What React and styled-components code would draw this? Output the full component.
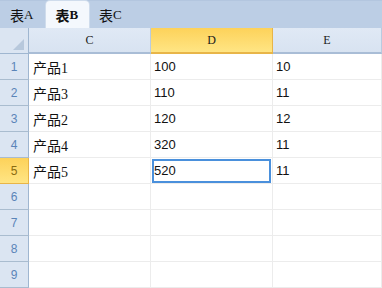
import React from 'react';
import styled, { createGlobalStyle } from 'styled-components';

const GlobalStyle = createGlobalStyle`
  html, body {
    margin: 0;
    padding: 0;
    width: 382px;
    height: 288px;
    overflow: hidden;
    background: #ffffff;
  }
`;

const Window = styled.div`
  width: 382px;
  height: 288px;
  display: flex;
  flex-direction: column;
  overflow: hidden;
  font-family: "Liberation Serif", "Noto Sans CJK SC", serif;
`;

const TitleStrip = styled.div`
  height: 7px;
  background: #dde8f5;
  border-bottom: 1px solid #b3c6df;
  overflow: hidden;
  display: flex;
  justify-content: flex-end;
  align-items: flex-end;
  padding-right: 118px;
`;

const TitleText = styled.span`
  font-family: "Liberation Sans", "Noto Sans CJK SC", sans-serif;
  font-size: 12px;
  line-height: 12px;
  margin-bottom: 3px;
  color: #8a95a6;
  letter-spacing: 2px;
  white-space: nowrap;
`;

const TabBar = styled.div`
  height: 31px;
  background: #bccee5;
  display: flex;
  align-items: flex-end;
`;

const Tab = styled.div`
  height: 27px;
  padding: ${(p) => (p.$active ? '0 11px 0 9px' : '0 10px')};
  margin-left: ${(p) => (p.$active ? '3px' : '0')};
  display: flex;
  align-items: center;
  font-size: 14px;
  font-weight: ${(p) => (p.$active ? 'bold' : 'normal')};
  color: #111;
  background: ${(p) => (p.$active ? '#f4f8fd' : 'transparent')};
  border-radius: 4px 4px 0 0;
  box-shadow: ${(p) => (p.$active ? '0 0 0 1px #cfdcec' : 'none')};
`;

const TabLetter = styled.span`
  font-size: 13px;
`;

const Sheet = styled.div`
  flex: 1;
  display: grid;
  grid-template-columns: 29px 122px 122px 1fr;
  grid-auto-rows: 26px;
`;

const Corner = styled.div`
  background: #dbe5f2;
  border-right: 1px solid #9fb6d0;
  border-bottom: 1px solid #9fb6d0;
  box-sizing: border-box;
  position: relative;
`;

const CornerTriangle = styled.div`
  position: absolute;
  right: 4px;
  bottom: 3px;
  width: 0;
  height: 0;
  border-left: 11px solid transparent;
  border-bottom: 11px solid #b7c8dc;
`;

const ColHead = styled.div`
  box-sizing: border-box;
  display: flex;
  align-items: center;
  justify-content: center;
  font-size: 12px;
  color: #1a1a1a;
  background: ${(p) =>
    p.$active
      ? 'linear-gradient(#fdd25a, #ffe584)'
      : 'linear-gradient(#e0e9f5, #d8e3f1)'};
  border-right: 1px solid ${(p) => (p.$active ? '#e8b548' : '#b9cbe0')};
  border-bottom: 2px solid ${(p) => (p.$active ? '#e8b548' : '#a9bdd6')};
`;

const RowHead = styled.div`
  box-sizing: border-box;
  display: flex;
  align-items: center;
  justify-content: center;
  font-family: "Liberation Sans", sans-serif;
  font-size: 12px;
  color: ${(p) => (p.$active ? '#8a6a10' : '#5a84b8')};
  background: ${(p) =>
    p.$active ? 'linear-gradient(#fdd25a, #ffe584)' : '#dbe5f2'};
  border-right: 1px solid ${(p) => (p.$active ? '#e8b548' : '#9fb6d0')};
  border-bottom: 1px solid ${(p) => (p.$active ? '#e8b548' : '#a9bccf')};
`;

const Cell = styled.div`
  box-sizing: border-box;
  display: flex;
  align-items: center;
  padding-left: ${(p) => (p.$cjk ? '4px' : '3px')};
  font-family: ${(p) =>
    p.$cjk
      ? '"Liberation Serif", "Noto Sans CJK SC", serif'
      : '"Liberation Sans", sans-serif'};
  font-size: ${(p) => (p.$cjk ? '14px' : '13px')};
  color: #111;
  background: #fff;
  border-right: 1px solid #ececec;
  border-bottom: 1px solid #ececec;
  position: relative;
`;

const Selection = styled.div`
  position: absolute;
  left: 1px;
  top: 1px;
  right: 1px;
  bottom: 0px;
  border: 2px solid #4a90dc;
  pointer-events: none;
`;

const rows = [
  ['产品1', '100', '10'],
  ['产品3', '110', '11'],
  ['产品2', '120', '12'],
  ['产品4', '320', '11'],
  ['产品5', '520', '11'],
  ['', '', ''],
  ['', '', ''],
  ['', '', ''],
  ['', '', ''],
];

export default function App() {
  return (
    <Window>
      <GlobalStyle />
      <TitleStrip>
        <TitleText>工作簿1</TitleText>
      </TitleStrip>
      <TabBar>
        <Tab>表<TabLetter>A</TabLetter></Tab>
        <Tab $active>表<TabLetter>B</TabLetter></Tab>
        <Tab>表<TabLetter>C</TabLetter></Tab>
      </TabBar>
      <Sheet>
        <Corner>
          <CornerTriangle />
        </Corner>
        <ColHead>C</ColHead>
        <ColHead $active>D</ColHead>
        <ColHead>E</ColHead>
        {rows.map((r, i) => (
          <React.Fragment key={i}>
            <RowHead $active={i === 4}>{i + 1}</RowHead>
            <Cell $cjk>{r[0]}</Cell>
            <Cell>
              {r[1]}
              {i === 4 && <Selection />}
            </Cell>
            <Cell>{r[2]}</Cell>
          </React.Fragment>
        ))}
      </Sheet>
    </Window>
  );
}
